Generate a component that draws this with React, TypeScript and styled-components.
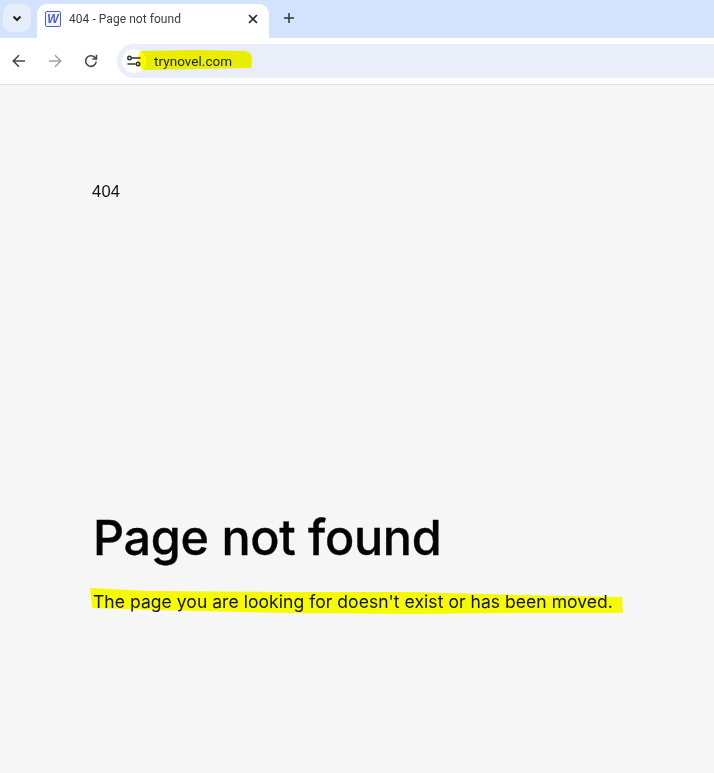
import React from "react";
import styled, { createGlobalStyle } from "styled-components";

const Global = createGlobalStyle`
  html, body { margin: 0; padding: 0; background: #f6f6f6; }
  body { font-family: "Roboto", "Liberation Sans", sans-serif; }
`;

const Window = styled.div`
  width: 714px;
  height: 773px;
  overflow: hidden;
  display: flex;
  flex-direction: column;
`;

const TabStrip = styled.div`
  height: 38px;
  flex: none;
  background: #d3e3fd;
  display: flex;
  align-items: flex-end;
  padding-left: 3px;
  box-sizing: border-box;
`;

const TabSearch = styled.div`
  width: 28px;
  height: 28px;
  margin: 0 6px 6px 0;
  border-radius: 9px;
  background: #e6eefc;
  display: flex;
  align-items: center;
  justify-content: center;
`;

const Tab = styled.div`
  width: 232px;
  height: 34px;
  background: #fff;
  border-radius: 10px 10px 0 0;
  display: flex;
  align-items: center;
  padding: 0 11px 4px 8px;
  box-sizing: border-box;
`;

const Favicon = styled.div`
  width: 14px;
  height: 14px;
  border: 1px solid #4a5fd0;
  border-radius: 2px;
  background: #f4f6ff;
  color: #4a5fd0;
  font: italic 700 12px/14px "Liberation Sans", sans-serif;
  text-align: center;
  flex: none;
`;

const TabTitle = styled.span`
  margin-left: 8px;
  flex: 1;
  font: 400 12px/16px "Roboto", sans-serif;
  color: #3c4043;
  letter-spacing: 0.05px;
`;

const NewTab = styled.div`
  width: 20px;
  height: 20px;
  margin: 0 0 10px 10px;
  display: flex;
  align-items: center;
  justify-content: center;
`;

const Toolbar = styled.div`
  height: 46px;
  flex: none;
  background: #fff;
  border-bottom: 1px solid #dedede;
  display: flex;
  align-items: center;
  padding: 0 0 0 9px;
  gap: 16px;
`;

const NavButton = styled.div`
  width: 20px;
  height: 20px;
  display: flex;
  align-items: center;
  justify-content: center;
`;

const Omnibox = styled.div`
  flex: 1;
  height: 34px;
  background: #e9eef8;
  border-radius: 17px 0 0 17px;
  display: flex;
  align-items: center;
  padding-left: 5px;
  position: relative;
`;

const SiteInfo = styled.div`
  width: 24px;
  height: 24px;
  border-radius: 50%;
  background: #fff;
  display: flex;
  align-items: center;
  justify-content: center;
  flex: none;
`;

const HighlightSvg = styled.svg`
  position: absolute;
  pointer-events: none;
  overflow: visible;
`;

const UrlHighlight = styled(HighlightSvg)`
  left: 21px;
  top: 6px;
  mix-blend-mode: multiply;
`;

const Url = styled.span`
  margin-left: 8px;
  font: 400 13.5px/20px "Roboto", sans-serif;
  color: #1f2328;
  letter-spacing: 0.05px;
`;

const Page = styled.main`
  flex: 1;
  background: #f6f6f6;
  padding: 97px 0 0 93px;
  display: flex;
  flex-direction: column;
`;

const Code = styled.div`
  margin-left: -1px;
  font: 400 16.5px/18px "Liberation Sans", sans-serif;
  letter-spacing: 0.2px;
  color: #111;
`;

const Title = styled.h1`
  margin: 308px 0 0;
  font: 500 48.5px/60px "Inter", sans-serif;
  letter-spacing: -0.3px;
  -webkit-text-stroke: 0.35px #050505;
  color: #050505;
`;

const Message = styled.div`
  margin-top: 22px;
  position: relative;
  width: 560px;
`;

const MessageHighlight = styled(HighlightSvg)`
  left: -3px;
  top: -7px;
`;

const MessageText = styled.p`
  position: relative;
  margin: 0;
  font: 400 17.5px/24px "Inter", sans-serif;
  letter-spacing: 0.05px;
  color: #111;
  white-space: nowrap;
`;

export default function App() {
  return (
    <Window>
      <Global />
      <TabStrip>
        <TabSearch>
          <svg width="12" height="12" viewBox="0 0 12 12" fill="none" stroke="#1f1f1f" strokeWidth="2">
            <path d="M2.5 4.5 6 8l3.5-3.5" />
          </svg>
        </TabSearch>
        <Tab>
          <Favicon>W</Favicon>
          <TabTitle>404 - Page not found</TabTitle>
          <svg width="10" height="10" viewBox="0 0 10 10" stroke="#2b2b2b" strokeWidth="1.7">
            <path d="M1 1l8 8M9 1l-8 8" />
          </svg>
        </Tab>
        <NewTab>
          <svg width="12" height="12" viewBox="0 0 12 12" stroke="#333" strokeWidth="1.5">
            <path d="M6 1v10M1 6h10" />
          </svg>
        </NewTab>
      </TabStrip>
      <Toolbar>
        <NavButton>
          <svg width="16" height="16" viewBox="0 0 16 16" fill="none" stroke="#474747" strokeWidth="1.6">
            <path d="M14 8H2.5M8 2.2 2.3 8 8 13.8" />
          </svg>
        </NavButton>
        <NavButton>
          <svg width="16" height="16" viewBox="0 0 16 16" fill="none" stroke="#a3a3a3" strokeWidth="1.6">
            <path d="M2 8h11.5M8 2.2 13.7 8 8 13.8" />
          </svg>
        </NavButton>
        <NavButton>
          <svg width="16" height="16" viewBox="0 0 16 16" fill="none" stroke="#474747" strokeWidth="1.6">
            <path d="M13.2 8.5a5.3 5.3 0 1 1-1.4-4.1L13.5 6" />
            <path d="M13.5 1.8V6H9.3" />
          </svg>
        </NavButton>
        <Omnibox>
          <SiteInfo>
            <svg width="14" height="12" viewBox="0 0 14 12" fill="none" stroke="#333" strokeWidth="1.6">
              <path d="M5 3h8.5M0.5 9h8" />
              <circle cx="2.5" cy="3" r="1.7" fill="#fff" />
              <circle cx="11" cy="9" r="1.7" fill="#fff" />
            </svg>
          </SiteInfo>
          <UrlHighlight width="114" height="20" viewBox="0 0 114 20">
            <path d="M2 1 L60 0 L108 1 L113 4 Q115 11 113 18 L60 19 L6 20 Q-1 17 0 8Z" fill="#ffff00" />
          </UrlHighlight>
          <Url>trynovel.com</Url>
        </Omnibox>
      </Toolbar>
      <Page>
        <Code>404</Code>
        <Title>Page not found</Title>
        <Message>
          <MessageHighlight width="535" height="32" viewBox="0 0 535 32">
            <path d="M0 5 L60 8 L200 9 L320 9 L430 12 L532 14 L533 30 L420 30 L320 31 L200 30 L60 27 L2 25Z" fill="#f6fb00" />
          </MessageHighlight>
          <MessageText>The page you are looking for doesn't exist or has been moved.</MessageText>
        </Message>
      </Page>
    </Window>
  );
}
